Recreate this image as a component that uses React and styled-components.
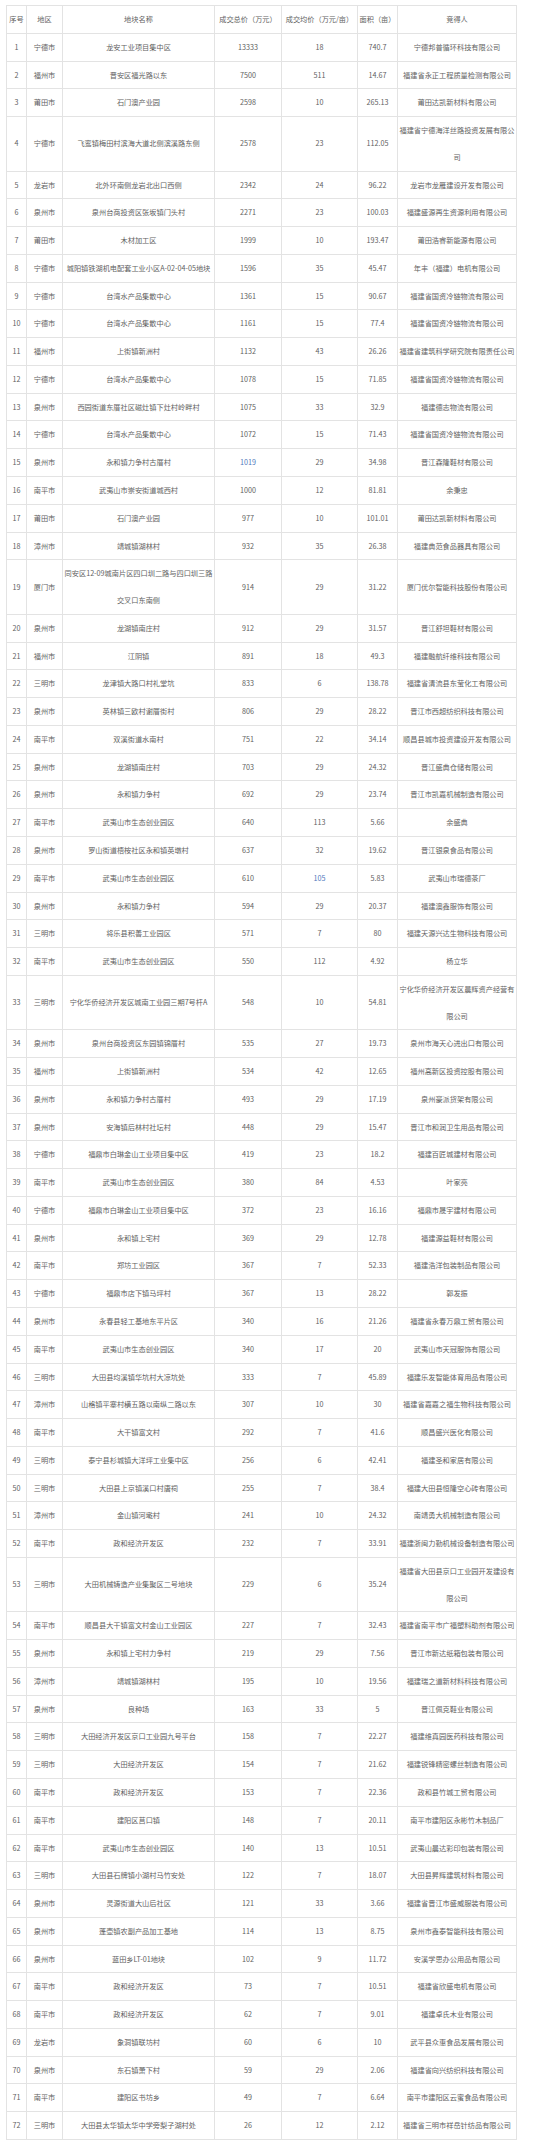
import React from "react";
import styled, { createGlobalStyle } from "styled-components";

const Global = createGlobalStyle`
  html, body { margin: 0; padding: 0; background: #fff; }
  body { font-family: "Noto Sans CJK SC", "Noto Sans", sans-serif; }
`;

const Page = styled.div`
  padding: 5px 0 0 6px;
  width: 510px;
`;

const Table = styled.table`
  width: 510px;
  table-layout: fixed;
  border-collapse: collapse;
  font-family: "Noto Sans CJK SC", "Noto Sans", sans-serif;
  font-size: 7.2px;
  color: #616161;
`;

const HeadCell = styled.th`
  border: 1px solid #e3e3e3;
  padding: 0;
  line-height: 26.77px;
  font-weight: normal;
  text-align: center;
  white-space: nowrap;
  overflow: visible;
`;

const Cell = styled.td`
  border: 1px solid #e3e3e3;
  padding: 0;
  line-height: 26.77px;
  text-align: center;
  vertical-align: middle;
  white-space: nowrap;
  overflow: visible;
  color: ${(p) => (p.$accent ? "#4f78bd" : "inherit")};
`;

const widths = [20, 36, 152, 67, 76, 40, 119];
const headers = ["序号", "地区", "地块名称", "成交总价（万元）", "成交均价（万元/亩）", "面积（亩）", "竞得人"];

const rows = [
  ["宁德市", "龙安工业项目集中区", "13333", "18", "740.7", "宁德邦普循环科技有限公司"],
  ["福州市", "晋安区福光路以东", "7500", "511", "14.67", "福建省永正工程质量检测有限公司"],
  ["莆田市", "石门澳产业园", "2598", "10", "265.13", "莆田达凯新材料有限公司"],
  ["宁德市", "飞鸾镇梅田村滨海大道北侧滨溪路东侧", "2578", "23", "112.05", ["福建省宁德海洋丝路投资发展有限公", "司"]],
  ["龙岩市", "北外环南侧龙岩北出口西侧", "2342", "24", "96.22", "龙岩市龙雁建设开发有限公司"],
  ["泉州市", "泉州台商投资区张坂镇门头村", "2271", "23", "100.03", "福建盛源再生资源利用有限公司"],
  ["莆田市", "木材加工区", "1999", "10", "193.47", "莆田浩睿新能源有限公司"],
  ["宁德市", "城阳镇铁湖机电配套工业小区A-02-04-05地块", "1596", "35", "45.47", "年丰（福建）电机有限公司"],
  ["宁德市", "台湾水产品集散中心", "1361", "15", "90.67", "福建省国资冷链物流有限公司"],
  ["宁德市", "台湾水产品集散中心", "1161", "15", "77.4", "福建省国资冷链物流有限公司"],
  ["福州市", "上街镇新洲村", "1132", "43", "26.26", "福建省建筑科学研究院有限责任公司"],
  ["宁德市", "台湾水产品集散中心", "1078", "15", "71.85", "福建省国资冷链物流有限公司"],
  ["泉州市", "西园街道东厝社区磁灶镇下灶村岭畔村", "1075", "33", "32.9", "福建德志物流有限公司"],
  ["宁德市", "台湾水产品集散中心", "1072", "15", "71.43", "福建省国资冷链物流有限公司"],
  ["泉州市", "永和镇力争村古厝村", "1019", "29", "34.98", "晋江森隆鞋材有限公司", 2],
  ["南平市", "武夷山市崇安街道城西村", "1000", "12", "81.81", "余秉忠"],
  ["莆田市", "石门澳产业园", "977", "10", "101.01", "莆田达凯新材料有限公司"],
  ["漳州市", "靖城镇湖林村", "932", "35", "26.38", "福建典范食品器具有限公司"],
  ["厦门市", ["同安区12-09城南片区四口圳二路与四口圳三路", "交叉口东南侧"], "914", "29", "31.22", "厦门优尔智能科技股份有限公司"],
  ["泉州市", "龙湖镇南庄村", "912", "29", "31.57", "晋江舒坦鞋材有限公司"],
  ["福州市", "江阴镇", "891", "18", "49.3", "福建融航纤维科技有限公司"],
  ["三明市", "龙津镇大路口村礼堂坑", "833", "6", "138.78", "福建省清流县东莹化工有限公司"],
  ["泉州市", "英林镇三欧村谢厝街村", "806", "29", "28.22", "晋江市西超纺织科技有限公司"],
  ["南平市", "双溪街道水南村", "751", "22", "34.14", "顺昌县城市投资建设开发有限公司"],
  ["泉州市", "龙湖镇南庄村", "703", "29", "24.32", "晋江盛典仓储有限公司"],
  ["泉州市", "永和镇力争村", "692", "29", "23.74", "晋江市凯嘉机械制造有限公司"],
  ["南平市", "武夷山市生态创业园区", "640", "113", "5.66", "余盛典"],
  ["泉州市", "罗山街道梧桉社区永和镇英墩村", "637", "32", "19.62", "晋江银泉食品有限公司"],
  ["南平市", "武夷山市生态创业园区", "610", "105", "5.83", "武夷山市瑞德茶厂", 3],
  ["泉州市", "永和镇力争村", "594", "29", "20.37", "福建澳鑫服饰有限公司"],
  ["三明市", "将乐县积善工业园区", "571", "7", "80", "福建天源兴达生物科技有限公司"],
  ["南平市", "武夷山市生态创业园区", "550", "112", "4.92", "杨立华"],
  ["三明市", "宁化华侨经济开发区城南工业园三期7号杆A", "548", "10", "54.81", ["宁化华侨经济开发区晨辉资产经营有", "限公司"]],
  ["泉州市", "泉州台商投资区东园镇锦厝村", "535", "27", "19.73", "泉州市海天心进出口有限公司"],
  ["福州市", "上街镇新洲村", "534", "42", "12.65", "福州高新区投资控股有限公司"],
  ["泉州市", "永和镇力争村古厝村", "493", "29", "17.19", "泉州豪派货架有限公司"],
  ["泉州市", "安海镇后林村社坛村", "448", "29", "15.47", "晋江市和润卫生用品有限公司"],
  ["宁德市", "福鼎市白琳金山工业项目集中区", "419", "23", "18.2", "福建百匠城建材有限公司"],
  ["南平市", "武夷山市生态创业园区", "380", "84", "4.53", "叶家亮"],
  ["宁德市", "福鼎市白琳金山工业项目集中区", "372", "23", "16.16", "福鼎市晟宇建材有限公司"],
  ["泉州市", "永和镇上宅村", "369", "29", "12.78", "福建源益鞋材有限公司"],
  ["南平市", "郑坊工业园区", "367", "7", "52.33", "福建浩洋包装制品有限公司"],
  ["宁德市", "福鼎市店下镇马坪村", "367", "13", "28.22", "郭发振"],
  ["泉州市", "永春县轻工基地东平片区", "340", "16", "21.26", "福建省永春万鼎工贸有限公司"],
  ["南平市", "武夷山市生态创业园区", "340", "17", "20", "武夷山市天冠服饰有限公司"],
  ["三明市", "大田县均溪镇华坑村大凉坑处", "333", "7", "45.89", "福建乐发智能体育用品有限公司"],
  ["漳州市", "山格镇平寨村横五路以南纵二路以东", "307", "10", "30", "福建省嘉嘉之福生物科技有限公司"],
  ["南平市", "大干镇富文村", "292", "7", "41.6", "顺昌盛兴医化有限公司"],
  ["三明市", "泰宁县杉城镇大洋坪工业集中区", "256", "6", "42.41", "福建圣和家居有限公司"],
  ["三明市", "大田县上京镇溪口村唐祠", "255", "7", "38.4", "福建大田县恒隆空心砖有限公司"],
  ["漳州市", "金山镇河墘村", "241", "10", "24.32", "南靖勇大机械制造有限公司"],
  ["南平市", "政和经济开发区", "232", "7", "33.91", "福建浙闽力勤机械设备制造有限公司"],
  ["三明市", "大田机械铸造产业集聚区二号地块", "229", "6", "35.24", ["福建省大田县京口工业园开发建设有", "限公司"]],
  ["南平市", "顺昌县大干镇富文村金山工业园区", "227", "7", "32.43", "福建省南平市广福塑料助剂有限公司"],
  ["泉州市", "永和镇上宅村力争村", "219", "29", "7.56", "晋江市新达纸箱包装有限公司"],
  ["漳州市", "靖城镇湖林村", "195", "10", "19.56", "福建瑞之道新材料科技有限公司"],
  ["泉州市", "良种场", "163", "33", "5", "晋江佩克鞋业有限公司"],
  ["三明市", "大田经济开发区京口工业园九号平台", "158", "7", "22.27", "福建维真园医药科技有限公司"],
  ["三明市", "大田经济开发区", "154", "7", "21.62", "福建锐锋精密螺丝制造有限公司"],
  ["南平市", "政和经济开发区", "153", "7", "22.36", "政和县竹城工贸有限公司"],
  ["南平市", "建阳区莒口镇", "148", "7", "20.11", "南平市建阳区永彬竹木制品厂"],
  ["南平市", "武夷山市生态创业园区", "140", "13", "10.51", "武夷山晨达彩印包装有限公司"],
  ["三明市", "大田县石牌镇小湖村马竹安处", "122", "7", "18.07", "大田县昇辉建筑材料有限公司"],
  ["泉州市", "灵源街道大山后社区", "121", "33", "3.66", "福建省晋江市盛威服装有限公司"],
  ["泉州市", "蓬壶镇农副产品加工基地", "114", "13", "8.75", "泉州市鑫泰智能科技有限公司"],
  ["泉州市", "蓝田乡LT-01地块", "102", "9", "11.72", "安溪学思办公用品有限公司"],
  ["南平市", "政和经济开发区", "73", "7", "10.51", "福建省欣盛电机有限公司"],
  ["南平市", "政和经济开发区", "62", "7", "9.01", "福建卓氏木业有限公司"],
  ["龙岩市", "象洞镇联坊村", "60", "6", "10", "武平县众惠食品发展有限公司"],
  ["泉州市", "东石镇萧下村", "59", "29", "2.06", "福建省向兴纺织科技有限公司"],
  ["南平市", "建阳区书坊乡", "49", "7", "6.64", "南平市建阳区云蜜食品有限公司"],
  ["三明市", "大田县太华镇太华中学旁梨子湖村处", "26", "12", "2.12", "福建省三明市祥岳针纺品有限公司"],
];

function Lines({ value }) {
  if (!Array.isArray(value)) return value;
  return value.map((line, i) => (
    <React.Fragment key={i}>
      {i > 0 && <br />}
      {line}
    </React.Fragment>
  ));
}

export default function App() {
  return (
    <>
      <Global />
      <Page>
        <Table>
          <colgroup>
            {widths.map((w, i) => (
              <col key={i} style={{ width: w }} />
            ))}
          </colgroup>
          <thead>
            <tr>
              {headers.map((h) => (
                <HeadCell key={h}>{h}</HeadCell>
              ))}
            </tr>
          </thead>
          <tbody>
            {rows.map((r, idx) => {
              const accentCol = r[6];
              const cells = [String(idx + 1), ...r.slice(0, 6)];
              return (
                <tr key={idx}>
                  {cells.map((c, ci) => (
                    <Cell key={ci} $accent={accentCol !== undefined && ci === accentCol + 1}>
                      <Lines value={c} />
                    </Cell>
                  ))}
                </tr>
              );
            })}
          </tbody>
        </Table>
      </Page>
    </>
  );
}
